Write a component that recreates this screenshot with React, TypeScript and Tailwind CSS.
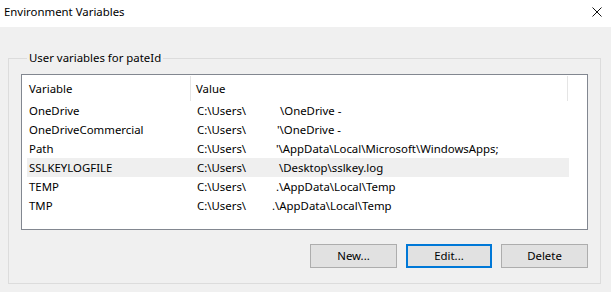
import React from 'react';

type Row = { name: string; head: string; gap: number; tail: string; selected?: boolean };

const rows: Row[] = [
  { name: 'OneDrive', head: 'C:\\Users\\', gap: 83, tail: '\\OneDrive -' },
  { name: 'OneDriveCommercial', head: 'C:\\Users\\', gap: 80, tail: "'\\OneDrive -" },
  { name: 'Path', head: 'C:\\Users\\', gap: 79, tail: "'\\AppData\\Local\\Microsoft\\WindowsApps;" },
  { name: 'SSLKEYLOGFILE', head: 'C:\\Users\\', gap: 82, tail: '\\Desktop\\sslkey.log', selected: true },
  { name: 'TEMP', head: 'C:\\Users\\', gap: 79, tail: '.\\AppData\\Local\\Temp' },
  { name: 'TMP', head: 'C:\\Users\\', gap: 75, tail: '.\\AppData\\Local\\Temp' },
];

export default function App() {
  return (
    <div className="w-[611px] h-[292px] overflow-hidden bg-[#f0f0f0] text-[11.4px] leading-none text-black font-['Segoe_UI','Noto_Sans',sans-serif]">
      {/* title bar */}
      <div className="h-[27px] bg-white flex items-center justify-between pl-[4px] pr-[8px]">
        <span className="-mt-[3px]">Environment Variables</span>
        <svg width="10" height="10" viewBox="0 0 10 10" className="-mt-[4px] mr-[1px]">
          <path d="M0.5 0.5 L9.5 9.5 M9.5 0.5 L0.5 9.5" stroke="#111" strokeWidth="1" />
        </svg>
      </div>

      {/* group box */}
      <fieldset className="mt-[24px] ml-[8px] w-[592px] h-[233px] border border-[#dcdcdc] px-[12px] pb-0">
        <legend className="ml-[6px] px-[2px] leading-[14px]">User variables for pateId</legend>

        {/* list view */}
        <div className="mt-[9px] w-[567px] h-[156px] border border-[#828790] bg-white">
          <div className="flex h-[25px] mt-[1px] ml-[5px]">
            <div className="w-[164px] flex items-center pl-[2px] border-r border-[#e5e5e5]">Variable</div>
            <div className="w-[377px] flex items-center pl-[5px] border-r border-[#e5e5e5]">Value</div>
          </div>
          {rows.map((r) => (
            <div
              key={r.name}
              className={`flex h-[19px] items-center ml-[5px] w-[542px] ${r.selected ? 'bg-[#efefef]' : ''}`}
            >
              <div className="w-[165px] pl-[2px]">{r.name}</div>
              <div className="flex pl-[5px] whitespace-nowrap">
                <span className="inline-block" style={{ width: r.gap }}>{r.head}</span>
                <span>{r.tail}</span>
              </div>
            </div>
          ))}
        </div>

        {/* buttons */}
        <div className="flex justify-end gap-[9px] mt-[14px]">
          <button className="w-[87px] h-[24px] bg-[#e1e1e1] border border-[#adadad]">New...</button>
          <button className="w-[86px] h-[24px] bg-[#e1e1e1] border-2 border-[#0078d7]">Edit...</button>
          <button className="w-[87px] h-[24px] bg-[#e1e1e1] border border-[#adadad]">Delete</button>
        </div>
      </fieldset>
    </div>
  );
}
